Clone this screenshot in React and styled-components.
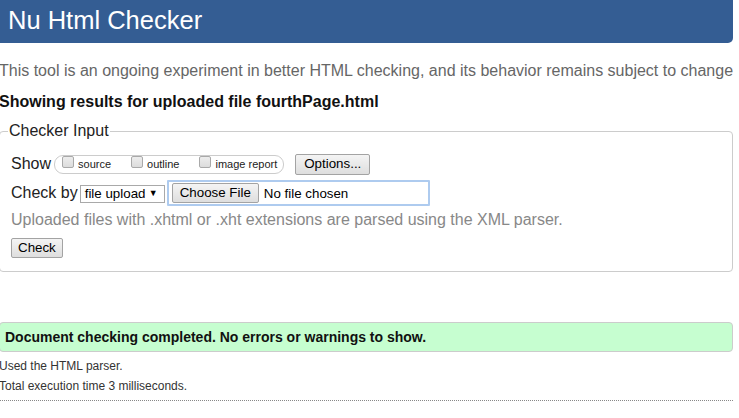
import React from "react";
import styled, { createGlobalStyle } from "styled-components";

const Global = createGlobalStyle`
  html, body { margin: 0; padding: 0; background: #fff; overflow: hidden; }
  body { font-family: "Liberation Sans", Arial, sans-serif; color: #222; }
`;

const Page = styled.div`
  width: 734px;
  margin-left: -1px;
`;

const Header = styled.h1`
  margin: 0;
  height: 43px;
  box-sizing: border-box;
  padding: 0 0 2px 9px;
  line-height: 41px;
  font-size: 25.5px;
  font-weight: normal;
  color: #fff;
  background: #345d93;
  border-radius: 0 0 5px 0;
`;

const Intro = styled.p`
  margin: 19px 0 0;
  font-size: 16px;
  line-height: 18.4px;
  color: #666;
  white-space: nowrap;
`;

const ResultsFor = styled.h2`
  margin: 12.6px 0 0;
  font-size: 16px;
  line-height: 18.4px;
  font-weight: bold;
  color: #111;
`;

const Fieldset = styled.fieldset`
  margin: 11px 0 0;
  padding: 0 11px 13px 11px;
  border: 1px solid #ccc;
  border-radius: 4px;
  min-width: 0;
`;

const Legend = styled.legend`
  margin-left: -3px;
  padding: 0 1px;
  font-size: 16px;
  line-height: 18.4px;
  color: #222;
`;

const Row = styled.div`
  display: flex;
  align-items: center;
  height: ${(p) => p.$h}px;
  margin-top: ${(p) => p.$mt}px;
`;

const RowLabel = styled.span`
  font-size: 16px;
  line-height: 18.4px;
  color: #222;
  margin-right: ${(p) => p.$gap}px;
  white-space: nowrap;
`;

const Pill = styled.div`
  display: flex;
  align-items: flex-start;
  height: 19px;
  box-sizing: border-box;
  padding: 0 6px 0 7px;
  border: 1px solid #ccc;
  border-radius: 9px;
`;

const Check = styled.span`
  width: 12px;
  height: 12px;
  box-sizing: border-box;
  border: 1px solid #a9a9a9;
  border-radius: 2px;
  background: linear-gradient(#ededed, #dcdcdc);
  margin-left: ${(p) => (p.$first ? 0 : 20)}px;
  flex: none;
`;

const CheckLabel = styled.span`
  margin: 2px 0 0 4px;
  font-size: 11px;
  line-height: 13px;
  color: #222;
  white-space: nowrap;
`;

const Button = styled.button`
  height: ${(p) => p.$h || 20}px;
  box-sizing: border-box;
  margin: 0 0 0 ${(p) => p.$ml || 0}px;
  padding: 0 ${(p) => p.$px}px;
  font-family: "Liberation Sans", Arial, sans-serif;
  font-size: 13.33px;
  color: #000;
  border: 1px solid #a3a3a3;
  border-radius: 2px;
  background: linear-gradient(#f4f4f4, #dedede);
  line-height: 18px;
  white-space: nowrap;
`;

const Select = styled.div`
  display: flex;
  align-items: center;
  justify-content: space-between;
  width: 85px;
  height: 18px;
  box-sizing: border-box;
  padding: 0 6px 0 4px;
  border: 1px solid #a9a9a9;
  font-size: 13.33px;
  color: #000;
  margin-top: 2px;
`;

const Arrow = styled.span`
  font-size: 9px;
  line-height: 9px;
`;

const FileBox = styled.div`
  display: flex;
  align-items: center;
  width: 263px;
  height: 26px;
  box-sizing: border-box;
  margin-left: 2px;
  padding: 1px 0 0 3px;
  border: 2px solid #aecbef;
  border-radius: 1px;
`;

const FileStatus = styled.span`
  margin-left: 5px;
  font-size: 13.33px;
  color: #000;
  white-space: nowrap;
`;

const Help = styled.p`
  margin: 5px 0 0;
  font-size: 16px;
  line-height: 18.4px;
  color: #888;
  white-space: nowrap;
`;

const ButtonRow = styled.div`
  display: flex;
  margin-top: 9px;
`;

const Success = styled.div`
  margin-top: 50px;
  height: 30px;
  box-sizing: border-box;
  display: flex;
  align-items: center;
  padding-left: 5px;
  border: 1px solid #ccc;
  border-radius: 4px;
  background: #c6fed0;
  font-size: 14px;
  font-weight: bold;
  color: #111;
`;

const Details = styled.div`
  margin-top: 4px;
  padding-bottom: 4px;
  border-bottom: 1px dotted #888;
`;

const DetailLine = styled.p`
  margin: 0;
  font-size: 12px;
  line-height: 20px;
  color: #333;
`;

export default function App() {
  return (
    <Page>
      <Global />
      <Header>Nu Html Checker</Header>
      <Intro>
        This tool is an ongoing experiment in better HTML checking, and its behavior remains subject to change
      </Intro>
      <ResultsFor>Showing results for uploaded file fourthPage.html</ResultsFor>
      <Fieldset>
        <Legend>Checker Input</Legend>
        <Row $h={21} $mt={13}>
          <RowLabel $gap={3}>Show</RowLabel>
          <Pill>
            <Check $first />
            <CheckLabel>source</CheckLabel>
            <Check />
            <CheckLabel>outline</CheckLabel>
            <Check />
            <CheckLabel>image report</CheckLabel>
          </Pill>
          <Button $h={21} $px={8} $ml={11}>Options...</Button>
        </Row>
        <Row $h={26} $mt={5}>
          <RowLabel $gap={2}>Check by</RowLabel>
          <Select>
            <span>file upload</span>
            <Arrow>▼</Arrow>
          </Select>
          <FileBox>
            <Button $px={7}>Choose File</Button>
            <FileStatus>No file chosen</FileStatus>
          </FileBox>
        </Row>
        <Help>Uploaded files with .xhtml or .xht extensions are parsed using the XML parser.</Help>
        <ButtonRow>
          <Button $px={6}>Check</Button>
        </ButtonRow>
      </Fieldset>
      <Success>Document checking completed. No errors or warnings to show.</Success>
      <Details>
        <DetailLine>Used the HTML parser.</DetailLine>
        <DetailLine>Total execution time 3 milliseconds.</DetailLine>
      </Details>
    </Page>
  );
}
